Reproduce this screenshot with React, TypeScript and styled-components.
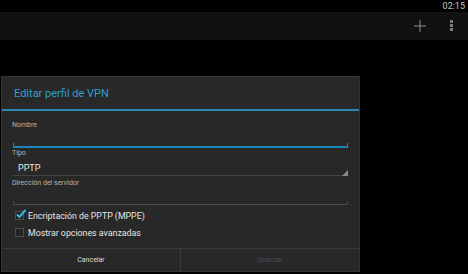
import React from "react";
import styled, { createGlobalStyle } from "styled-components";

const GlobalStyle = createGlobalStyle`
  html, body {
    margin: 0;
    padding: 0;
    background: #000;
    font-family: Roboto, "Liberation Sans", sans-serif;
    width: 468px;
    height: 274px;
    overflow: hidden;
  }
`;

const Screen = styled.div`
  display: flex;
  flex-direction: column;
  width: 468px;
  height: 274px;
  background: #000;
`;

const StatusBar = styled.div`
  height: 12px;
  display: flex;
  justify-content: flex-end;
  align-items: center;
  padding-right: 3px;
  color: #c8c8c8;
  font-size: 9px;
  line-height: 12px;
`;

const ActionBar = styled.div`
  height: 28px;
  background: #111111;
  display: flex;
  justify-content: flex-end;
  align-items: center;
  padding-right: 14px;
  gap: 23px;
`;

const Body = styled.div`
  flex: 1;
  padding: 36px 0 0 1px;
`;

const Dialog = styled.div`
  width: 357px;
  height: 194px;
  background: #282828;
  border: 1px solid #333;
  display: flex;
  flex-direction: column;
`;

const Title = styled.div`
  height: 31px;
  display: flex;
  align-items: center;
  padding-left: 12px;
  padding-top: 1px;
  color: #2e9fd0;
  font-size: 11px;
  border-bottom: 2px solid #2b88b0;
`;

const Form = styled.div`
  flex: 1;
  display: flex;
  flex-direction: column;
  padding: 10px 11px 0 10px;
`;

const Label = styled.div`
  font-size: 7px;
  color: #b4b4b4;
  height: 9px;
  line-height: 9px;
`;

const InputLine = styled.div<{ $focused?: boolean }>`
  height: 3px;
  margin: ${(p) => (p.$focused ? "13px 0 1px 1px" : "13px 0 2px 1px")};
  border: 1px solid ${(p) => (p.$focused ? "#1a86b5" : "#4a4a4a")};
  border-top: none;
  border-bottom-width: ${(p) => (p.$focused ? "2px" : "1px")};
`;

const SpinnerValue = styled.div`
  font-size: 9px;
  color: #e6e6e6;
  padding-left: 6px;
  height: 13px;
  line-height: 13px;
  margin-top: 4px;
`;

const SpinnerLine = styled.div`
  position: relative;
  height: 1px;
  background: #444;
  margin: 0 0 3px 1px;

  &::after {
    content: "";
    position: absolute;
    right: 0;
    bottom: 0;
    border-left: 6px solid transparent;
    border-bottom: 6px solid #8a8a8a;
  }
`;

const CheckRow = styled.div`
  display: flex;
  align-items: center;
  gap: 4px;
  height: 17px;
  padding-left: 3px;
  color: #e6e6e6;
  font-size: 8.8px;
`;

const Box = styled.div`
  width: 7px;
  height: 7px;
  border: 1px solid #4c4c4c;
  background: #242424;
  position: relative;
`;

const Footer = styled.div`
  height: 22px;
  border-top: 1px solid #3a3a3a;
  display: grid;
  grid-template-columns: 178px 1fr;
`;

const FooterButton = styled.div<{ $disabled?: boolean }>`
  display: flex;
  align-items: center;
  justify-content: center;
  font-size: 7px;
  color: ${(p) => (p.$disabled ? "#4e4e4e" : "#dcdcdc")};
  border-left: ${(p) => (p.$disabled ? "1px solid #3a3a3a" : "none")};
`;

const Check = () => (
  <svg width="12" height="12" viewBox="0 0 12 12" style={{ position: "absolute", left: -1, top: -4 }}>
    <path d="M2 6.5 L4.5 9 L10.5 2" stroke="#33b5e5" strokeWidth="2" fill="none" />
  </svg>
);

export default function App() {
  return (
    <Screen>
      <GlobalStyle />
      <StatusBar>02:15</StatusBar>
      <ActionBar>
        <svg width="14" height="14" viewBox="0 0 14 14">
          <path d="M7 1 V13 M1 7 H13" stroke="#8c8c8c" strokeWidth="1" />
        </svg>
        <svg width="4" height="12" viewBox="0 0 4 12">
          <rect x="0" y="0" width="3" height="3" fill="#7a7a7a" />
          <rect x="0" y="4" width="3" height="3" fill="#7a7a7a" />
          <rect x="0" y="8" width="3" height="3" fill="#7a7a7a" />
        </svg>
      </ActionBar>
      <Body>
        <Dialog>
          <Title>Editar perfil de VPN</Title>
          <Form>
            <Label>Nombre</Label>
            <InputLine $focused />
            <Label>Tipo</Label>
            <SpinnerValue>PPTP</SpinnerValue>
            <SpinnerLine />
            <Label>Dirección del servidor</Label>
            <InputLine />
            <CheckRow>
              <Box>
                <Check />
              </Box>
              Encriptación de PPTP (MPPE)
            </CheckRow>
            <CheckRow>
              <Box />
              Mostrar opciones avanzadas
            </CheckRow>
          </Form>
          <Footer>
            <FooterButton>Cancelar</FooterButton>
            <FooterButton $disabled>Guardar</FooterButton>
          </Footer>
        </Dialog>
      </Body>
    </Screen>
  );
}
